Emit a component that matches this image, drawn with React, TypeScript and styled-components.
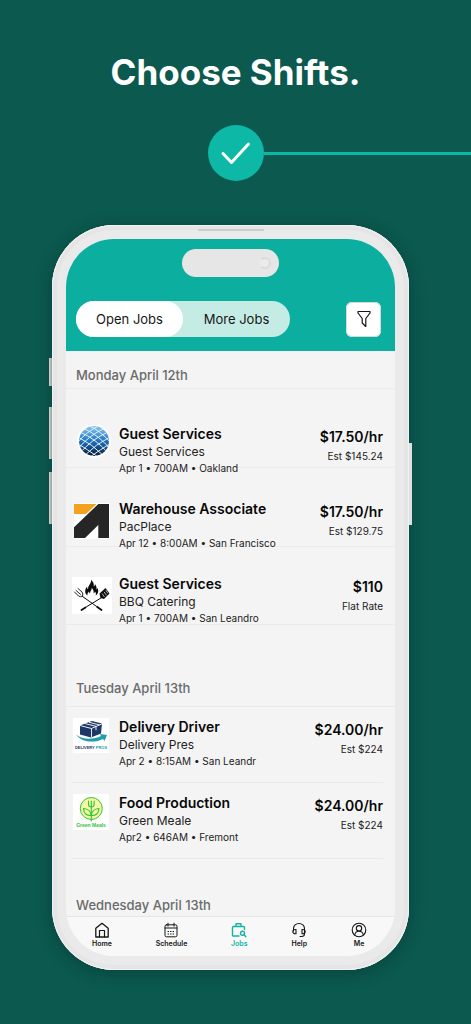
import React from 'react';
import styled, { createGlobalStyle, css } from 'styled-components';

const Global = createGlobalStyle`
  * { box-sizing: border-box; }
  body { margin: 0; background: #0b594f; font-family: Inter, "Noto Sans", sans-serif; color: #111; }
  button { font: inherit; border: 0; padding: 0; cursor: pointer; }
  svg { display: block; }
`;

const Page = styled.main`
  min-height: 100vh;
  padding-bottom: 54px;
  overflow: hidden;
  background: #0b594f;
`;

const Title = styled.h1`
  margin: 0;
  padding-top: 48px;
  text-align: center;
  font-size: 35px;
  line-height: 48px;
  font-weight: 700;
  color: #fff;
`;

const Progress = styled.div`
  display: grid;
  grid-template-columns: 1fr 56px 1fr;
  align-items: center;
  margin-top: 29px;
`;

const StepDot = styled.div`
  grid-column: 2;
  height: 56px;
  border-radius: 50%;
  background: #0db8a6;
`;

const StepLine = styled.div`
  height: 3px;
  background: #0db8a6;
`;

const Phone = styled.section`
  position: relative;
  margin: 44px 62px 0 52px;
  padding: 14px;
  border-radius: 62px;
  background: #eaeaea;
  box-shadow: inset 0 0 0 1px #f1f1f1, inset 0 0 0 5px #e5e5e5, 0 3px 16px rgba(0, 30, 26, 0.35);
`;

const SideKey = styled.span<{ $side: 'left' | 'right'; $top: number; $length: number }>`
  position: absolute;
  ${(p) => p.$side}: -3px;
  top: ${(p) => p.$top}px;
  width: 3px;
  height: ${(p) => p.$length}px;
  background: ${(p) =>
    p.$side === 'left' ? 'linear-gradient(to right, #d2d2d2, #999c9b)' : '#dfe1e0'};
`;

const Speaker = styled.span`
  position: absolute;
  top: 4px;
  left: 50%;
  width: 66px;
  height: 2px;
  margin-left: -33px;
  background: #cdcdcd;
`;

const Screen = styled.div`
  overflow: hidden;
  border-radius: 48px;
  background: #f4f4f4;
`;

const Header = styled.header`
  height: 112px;
  padding-top: 10px;
  background: #0caf9f;
`;

const Island = styled.div`
  display: flex;
  align-items: center;
  justify-content: flex-end;
  width: 97px;
  height: 28px;
  margin: 0 auto;
  padding-right: 8px;
  border-radius: 14px;
  background: #e6e6e6;
`;

const Camera = styled.span`
  width: 12px;
  height: 12px;
  border-radius: 50%;
  border: 2px solid #dadada;
  border-left-color: #e9e9e9;
  background: #ebebeb;
`;

const Controls = styled.div`
  display: flex;
  align-items: center;
  justify-content: space-between;
  margin-top: 24px;
  padding: 0 14px 0 10px;
`;

const Segments = styled.div`
  display: flex;
  width: 214px;
  height: 36px;
  border-radius: 18px;
  background: #c4ece5;
`;

const Segment = styled.button<{ $active?: boolean }>`
  flex: 1;
  border-radius: 18px;
  background: ${(p) => (p.$active ? '#fff' : 'transparent')};
  color: #161616;
  font-size: 13px;
  line-height: 18px;
`;

const FilterButton = styled.button`
  display: grid;
  place-items: center;
  width: 35px;
  height: 35px;
  border-radius: 6px;
  background: #fff;
  box-shadow: inset 0 0 0 1px #cfdcd9;
`;

const DayHeading = styled.h2<{ $before: number; $after: number }>`
  margin: 0;
  padding: ${(p) => p.$before}px 10px ${(p) => p.$after}px;
  font-size: 13px;
  line-height: 20px;
  font-weight: 500;
  color: #6a6a6a;
`;

const JobList = styled.ul<{ $ruled?: boolean }>`
  list-style: none;
  margin: 0;
  padding: 0;
  ${(p) =>
    p.$ruled
      ? css`
          height: 237px;
          padding-top: 37px;
          background: repeating-linear-gradient(to bottom, #ebebeb 0 1px, transparent 1px 79px);
          border-bottom: 1px solid #ebebeb;
        `
      : css`
          border-top: 1px solid #e9e9e9;
        `}
`;

const Job = styled.li<{ $lined?: boolean }>`
  display: grid;
  grid-template-columns: 40px 1fr auto;
  column-gap: 7px;
  height: ${(p) => (p.$lined ? 76 : 75)}px;
  margin: 0 12px 0 6px;
  ${(p) =>
    p.$lined &&
    css`
      padding-top: 11px;
      border-bottom: 1px solid #e9e9e9;
    `}
`;

const JobText = styled.div`
  min-width: 0;
  white-space: nowrap;
`;

const JobTitle = styled.h3`
  margin: 0;
  font-size: 14px;
  line-height: 18px;
  font-weight: 600;
  color: #080808;
`;

const JobLine = styled.p<{ $small?: boolean }>`
  margin: 0;
  font-size: ${(p) => (p.$small ? 10 : 12)}px;
  line-height: 17px;
  color: #222;
`;

const Pay = styled.div`
  padding-top: 2px;
  text-align: right;
`;

const Rate = styled.strong`
  display: block;
  font-size: 14px;
  line-height: 20px;
  font-weight: 600;
  color: #080808;
`;

const Estimate = styled.span`
  display: block;
  font-size: 10px;
  line-height: 18px;
  color: #222;
`;

const TabBar = styled.nav`
  display: flex;
  justify-content: space-between;
  height: 40px;
  padding: 0 28px 0 26px;
  border-top: 1px solid #e6e6e6;
  background: #f8f8f8;
`;

const Tab = styled.button<{ $active?: boolean }>`
  display: flex;
  flex-direction: column;
  align-items: center;
  padding-top: 5px;
  background: none;
  color: ${(p) => (p.$active ? '#12b5a4' : '#161616')};
  font-size: 7px;
  line-height: 12px;
  font-weight: 600;
`;

const TabIcon = styled.svg.attrs({ width: 16, height: 16, viewBox: '0 0 16 16', 'aria-hidden': true })`
  fill: none;
  stroke: currentColor;
  stroke-linecap: round;
  stroke-linejoin: round;
`;

const Logo = styled.svg.attrs({ width: 40, height: 40, viewBox: '0 0 40 40', 'aria-hidden': true })``;

const GlobeLogo = () => (
  <Logo>
    <defs>
      <linearGradient id="globe" x1="0" y1="0" x2="0" y2="1">
        <stop offset="0" stopColor="#8cc8f0" />
        <stop offset="0.5" stopColor="#1f74c0" />
        <stop offset="1" stopColor="#0a1838" />
      </linearGradient>
      <clipPath id="globeClip"><circle cx="22" cy="16" r="15" /></clipPath>
    </defs>
    <circle cx="22" cy="16" r="17" fill="#fff" />
    <circle cx="22" cy="16" r="15" fill="url(#globe)" />
    <g clipPath="url(#globeClip)" fill="none" stroke="#e4f3fc" strokeWidth="1">
      <path d="M4 12L20 -2M5 18Q14 7 28 0M6 24Q16 11 33 3M8 28Q20 14 36 7M12 31Q24 19 38 12M18 32Q28 25 39 18M26 32L39 24" />
      <path d="M40 12L24 -2M39 18Q30 7 16 0M38 24Q28 11 11 3M36 28Q24 14 8 7M32 31Q20 19 6 12M26 32Q16 25 5 18M18 32L5 24" />
    </g>
  </Logo>
);

const ArrowLogo = () => (
  <Logo>
    <rect x="2" y="3" width="36" height="36" fill="#fff" />
    <path d="M2 4h22.6L14 14H2z" fill="#f5a01f" />
    <path d="M26.3 4H37v34H26.3V25L13 38H2V27.3z" fill="#262626" />
  </Logo>
);

const GrillLogo = () => (
  <Logo>
    <rect y="2" width="40" height="37" fill="#fff" />
    <path
      d="M15.5 20.5C12 18 13 14 15.2 11.5C15 13 15.3 13.8 16 14.2C16 10 19.5 9 19 4.8C21.5 7 22.2 9 21.7 11.5C22.6 11 23 10 22.9 9C25 12 24.6 13.4 24.6 14.6C25.2 14.2 25.5 13.6 25.4 12.8C27 16 26.2 19 23.6 20.6C24.3 18.6 23.8 17.4 22.9 16.4C22.7 17.6 22.2 18 21.6 18.2C21.8 15.8 21.2 14.2 19.8 13C19.9 15.5 17.8 16 18 18.4C17.3 18.1 17 17.5 17 16.6C15.7 17.8 15.2 19 15.5 20.5z"
      fill="#0c0c0c"
    />
    <g fill="none" stroke="#0c0c0c" strokeLinecap="round">
      <path d="M10.5 21.5L24 31M29 23L14.5 31.8" strokeWidth="1" />
      <path d="M25 31.8l4.500 3.200M13.500 32.400L9.500 35" strokeWidth="1.800" />
      <path d="M2.500 17l4 4q2 1.400 4 0q1-2-0.500-4l-4-3.500M4 15.400l4.500 4" strokeWidth="0.900" />
    </g>
    <path d="M27.500 18.500l6-5.500 4 5.500-5.500 5.500-3.500-1z" fill="#0c0c0c" />
    <path d="M30 18.500l2.500 3.500M32 16.800l2.500 3.500M33.800 15.200l2 3" stroke="#fff" strokeWidth="0.700" />
  </Logo>
);

const LogoText = styled.text<{ $size: number }>`
  font-family: "Liberation Sans Narrow", "Liberation Sans", sans-serif;
  font-weight: 700;
  font-size: ${(p) => p.$size}px;
`;

const DeliveryLogo = () => (
  <Logo>
    <rect x="1" width="36" height="35" fill="#fff" />
    <path d="M8 7.5L20 3l10 2.500-1 10L19 19.500 8 16.500z" fill="#1d3767" />
    <path d="M8 7.5l11.500 3L30 5.800M19.500 10.500V19M13 5.600l11 2.700v4M17 4.300l10.500 2.600" fill="none" stroke="#fff" strokeWidth="0.900" />
    <path d="M4 16.5C11 22.500 22 21.500 29 18L28 16L35 17L32.500 23L31 21C23 25 10 25 4 16.500z" fill="#1c9db0" />
    <LogoText $size={4} x="19" y="31" textAnchor="middle" fill="#1d3767">
      DELIVERY <tspan fill="#1c9db0">PROS</tspan>
    </LogoText>
  </Logo>
);

const GreenLogo = () => (
  <Logo>
    <rect x="1" width="36" height="36" fill="#fff" />
    <circle cx="19.3" cy="14.500" r="11" fill="#f6f7a4" stroke="#2fc43a" strokeWidth="1" />
    <g fill="none" stroke="#2fc43a" strokeWidth="1.100" strokeLinecap="round">
      <path d="M19.300 7v20M16.500 7v3.500q0 2.500 2.800 2.500t2.800-2.500V7" />
      <path d="M19.300 21.500Q12 22 11.500 14.500Q18.500 15 19.300 21.500M19.300 21.500Q26.500 22 27 14.500Q20 15 19.300 21.500" />
    </g>
    <LogoText $size={5} x="19" y="33" textAnchor="middle" fill="#2fc43a">Green Meals</LogoText>
  </Logo>
);

type JobData = {
  logo: React.ReactNode;
  title: string;
  company: string;
  details: string;
  rate: string;
  estimate: string;
};

const monday: JobData[] = [
  { logo: <GlobeLogo />, title: 'Guest Services', company: 'Guest Services', details: 'Apr 1 • 700AM • Oakland', rate: '$17.50/hr', estimate: 'Est $145.24' },
  { logo: <ArrowLogo />, title: 'Warehouse Associate', company: 'PacPlace', details: 'Apr 12 • 8:00AM • San Francisco', rate: '$17.50/hr', estimate: 'Est $129.75' },
  { logo: <GrillLogo />, title: 'Guest Services', company: 'BBQ Catering', details: 'Apr 1 • 700AM • San Leandro', rate: '$110', estimate: 'Flat Rate' },
];

const tuesday: JobData[] = [
  { logo: <DeliveryLogo />, title: 'Delivery Driver', company: 'Delivery Pres', details: 'Apr 2 • 8:15AM • San Leandr', rate: '$24.00/hr', estimate: 'Est $224' },
  { logo: <GreenLogo />, title: 'Food Production', company: 'Green Meale', details: 'Apr2 • 646AM • Fremont', rate: '$24.00/hr', estimate: 'Est $224' },
];

const JobRow = ({ job, lined }: { job: JobData; lined?: boolean }) => (
  <Job $lined={lined}>
    {job.logo}
    <JobText>
      <JobTitle>{job.title}</JobTitle>
      <JobLine>{job.company}</JobLine>
      <JobLine $small>{job.details}</JobLine>
    </JobText>
    <Pay>
      <Rate>{job.rate}</Rate>
      <Estimate>{job.estimate}</Estimate>
    </Pay>
  </Job>
);

export default function App() {
  return (
    <>
      <Global />
      <Page>
        <Title>Choose Shifts.</Title>
        <Progress>
          <StepDot>
            <svg width="56" height="56" viewBox="0 0 56 56" aria-hidden="true">
              <path d="M15 28.5l8.500 9L40.500 19" fill="none" stroke="#fff" strokeWidth="3" strokeLinecap="round" strokeLinejoin="round" />
            </svg>
          </StepDot>
          <StepLine />
        </Progress>
        <Phone>
          <Speaker />
          <SideKey $side="left" $top={133} $length={28} />
          <SideKey $side="left" $top={182} $length={52} />
          <SideKey $side="left" $top={247} $length={52} />
          <SideKey $side="right" $top={218} $length={82} />
          <Screen>
            <Header>
              <Island><Camera /></Island>
              <Controls>
                <Segments>
                  <Segment $active>Open Jobs</Segment>
                  <Segment>More Jobs</Segment>
                </Segments>
                <FilterButton aria-label="Filter">
                  <svg width="14" height="18" viewBox="0 0 14 18" fill="none" stroke="#161616" strokeLinejoin="round" aria-hidden="true">
                    <path d="M1 1.500h12v1.500L8.800 8.500v8L5.200 13V8.500L1 3z" strokeWidth="1.200" />
                  </svg>
                </FilterButton>
              </Controls>
            </Header>
            <DayHeading $before={14} $after={3}>Monday April 12th</DayHeading>
            <JobList $ruled>
              {monday.map((job) => <JobRow key={job.company} job={job} />)}
            </JobList>
            <DayHeading $before={53} $after={8}>Tuesday April 13th</DayHeading>
            <JobList>
              {tuesday.map((job) => <JobRow key={job.company} job={job} lined />)}
            </JobList>
            <DayHeading $before={36} $after={1}>Wednesday April 13th</DayHeading>
            <TabBar>
              <Tab>
                <TabIcon strokeWidth="1.3">
                  <path d="M1.800 6.300L8 1.300l6.200 5V15H1.800z" />
                  <path d="M5.500 15V8.500h5V15" strokeWidth="1.2" />
                </TabIcon>
                Home
              </Tab>
              <Tab>
                <TabIcon strokeWidth="1">
                  <rect x="2" y="2.800" width="12" height="12" rx="1.500" />
                  <path d="M2 6h12M5 1.200v3M11 1.200v3" />
                  <path d="M5 9.500h6.500M5 12h6.500" strokeDasharray="0.600 1.900" />
                </TabIcon>
                Schedule
              </Tab>
              <Tab $active>
                <TabIcon strokeWidth="1.4">
                  <path d="M8 14H2.300q-0.800 0-0.800-0.800V5.300q0-0.800 0.800-0.800h10.400q0.800 0 0.800 0.800V7.500M5 4.500V2.300q0-0.500 0.500-0.500h4q0.500 0 0.500 0.500V4.500" />
                  <circle cx="11.500" cy="11.200" r="2" />
                  <path d="M13 12.800l1.800 2" />
                </TabIcon>
                Jobs
              </Tab>
              <Tab>
                <TabIcon strokeWidth="1.1">
                  <path d="M2.500 9V6.500a5.500 5 0 0 1 11 0V12q0 2.500-3 2.500H9" />
                  <path d="M5 7.500v4.200q-3.200 0.300-3.200-2.100T5 7.500zM11 7.500v4.200q3.200 0.300 3.200-2.100T11 7.500z" />
                </TabIcon>
                Help
              </Tab>
              <Tab>
                <TabIcon strokeWidth="1.1">
                  <circle cx="8" cy="8" r="6.800" />
                  <circle cx="8" cy="6.300" r="2.700" />
                  <path d="M3.700 13q0.600-3.800 4.300-3.800t4.300 3.800" />
                </TabIcon>
                Me
              </Tab>
            </TabBar>
          </Screen>
        </Phone>
      </Page>
    </>
  );
}
